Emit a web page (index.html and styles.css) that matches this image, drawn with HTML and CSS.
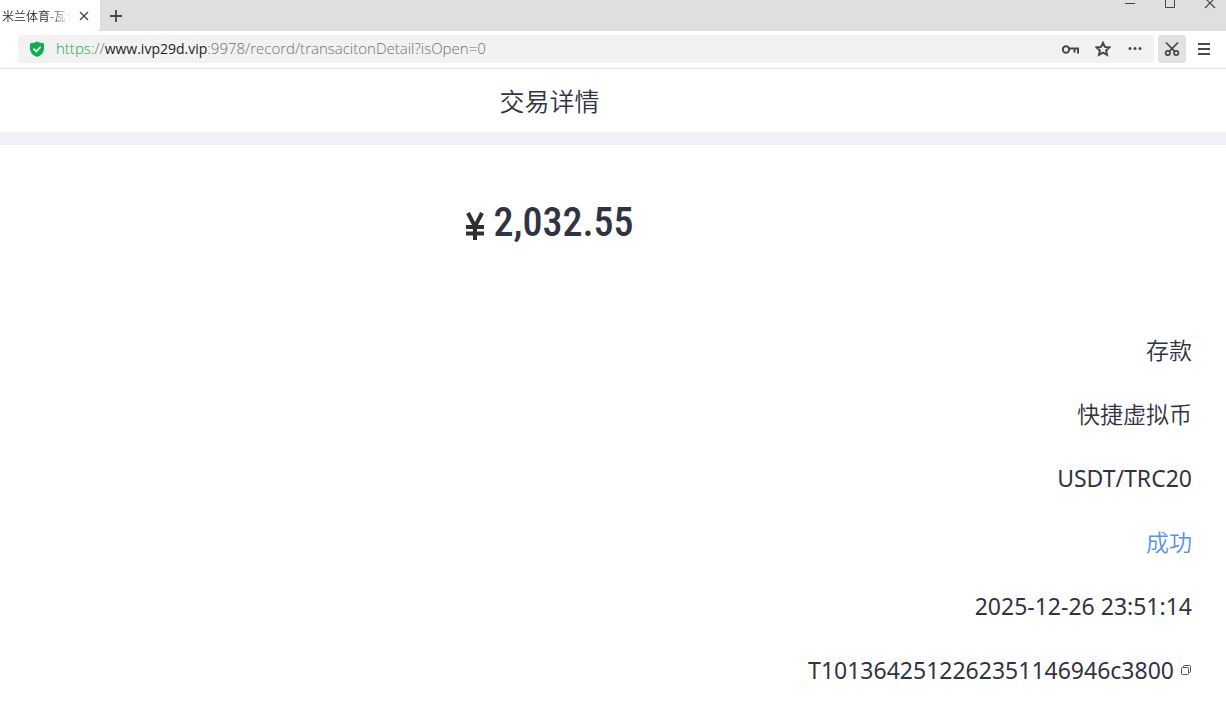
FILE: index.html
```html
<!DOCTYPE html>
<html lang="zh-CN">
<head>
<meta charset="utf-8">
<meta name="viewport" content="width=device-width, initial-scale=1">
<title>交易详情</title>
<link rel="stylesheet" href="styles.css">
</head>
<body>
<header class="browser">
  <div class="tabs">
    <div class="tab">
      <span class="tab-title">米兰体育-瓦亻</span>
      <button class="icon-button tab-close" aria-label="关闭标签页">
        <svg width="10" height="10" viewBox="0 0 10 10"><path d="M1 1l8 8M9 1L1 9" stroke="#444" stroke-width="1.3"/></svg>
      </button>
    </div>
    <button class="icon-button new-tab" aria-label="新标签页">
      <svg width="14" height="14" viewBox="0 0 14 14"><path d="M7 1v12M1 7h12" stroke="#444" stroke-width="1.8"/></svg>
    </button>
    <div class="window-controls">
      <button class="icon-button" aria-label="最小化"><svg width="12" height="14" viewBox="0 0 12 14"><path d="M1 8.500h10" stroke="#444"/></svg></button>
      <button class="icon-button" aria-label="最大化"><svg width="12" height="14" viewBox="0 0 12 14"><path d="M1.500 2.500h9v10h-9z" fill="none" stroke="#444"/></svg></button>
      <button class="icon-button" aria-label="关闭"><svg width="12" height="14" viewBox="0 0 12 14"><path d="M1 3l10 10M11 3L1 13" stroke="#444" stroke-width="1.1"/></svg></button>
    </div>
  </div>
  <div class="toolbar">
    <div class="address">
      <svg class="shield" width="16" height="16" viewBox="0 0 16 16"><path d="M8 0.500Q11 2.500 15 2.300V8q0 5.300-7 8Q1 13.300 1 8V2.300Q5 2.500 8 .500z" fill="#10ae50"/><path d="M4.500 7.700l2.700 2.700 4.500-4.500" fill="none" stroke="#fff" stroke-width="1.8"/></svg>
      <div class="url" role="textbox" aria-label="地址栏" tabindex="0"><span class="url-scheme">https:</span>//<span class="url-host">www.ivp29d.vip</span>:9978/record/transacitonDetail?isOpen=0</div>
      <button class="icon-button" aria-label="密码">
        <svg width="18" height="16" viewBox="0 0 18 16" fill="none" stroke="#484848" stroke-width="2"><circle cx="5" cy="8.500" r="3.200"/><path d="M8 7.500h9v5M13.500 8v3.500"/></svg>
      </button>
      <button class="icon-button" aria-label="收藏">
        <svg width="16" height="16" viewBox="0 0 16 16"><path d="M8 1.800l1.900 4.100 4.500.500-3.300 3 .9 4.500L8 11.600l-4 2.300.900-4.500-3.300-3 4.500-.500z" fill="none" stroke="#484848" stroke-width="2"/></svg>
      </button>
      <button class="icon-button" aria-label="更多">
        <svg width="16" height="16" viewBox="0 0 16 16" fill="#484848"><circle cx="3" cy="7.500" r="1.500"/><circle cx="8" cy="7.500" r="1.500"/><circle cx="13" cy="7.500" r="1.500"/></svg>
      </button>
    </div>
    <button class="icon-button snip" aria-label="截图">
      <svg width="16" height="16" viewBox="0 0 16 16" fill="none" stroke="#484848" stroke-width="1.700"><circle cx="3.800" cy="12" r="2.200"/><circle cx="12.200" cy="12" r="2.200"/><path d="M2 1.500l8.700 8.800M14 1.500l-8.700 8.800"/></svg>
    </button>
    <button class="icon-button menu" aria-label="菜单">
      <svg width="14" height="14" viewBox="0 0 14 14"><path d="M1 2h12M1 7h12M1 12h12" stroke="#484848" stroke-width="2"/></svg>
    </button>
  </div>
</header>
<main>
  <h1 class="page-title">交易详情</h1>
  <p class="amount">
    <svg class="yen" width="20" height="33" viewBox="0 -6 20 33" role="img" aria-label="¥"><path d="M3 0l7 13.500L17 0M10 12v15M1 14h18M1 20.500h18" fill="none" stroke="#2e3033" stroke-width="4"/></svg>
    <span>2,032.55</span>
  </p>
  <ul class="details">
    <li class="label">存款</li>
    <li class="label">快捷虚拟币</li>
    <li>USDT/TRC20</li>
    <li class="label success">成功</li>
    <li>2025-12-26 23:51:14</li>
    <li>T1013642512262351146946c3800
      <button class="icon-button copy" aria-label="复制">
        <svg width="12" height="12" viewBox="0 0 12 12" fill="none" stroke="#555"><rect x="1.500" y="3.500" width="7" height="7" rx="1"/><path d="M3.500 3.500v-1q0-1 1-1h5q1 0 1 1v5q0 1-1 1h-1"/></svg>
      </button>
    </li>
  </ul>
</main>
</body>
</html>
```
FILE: styles.css
```css
* { box-sizing: border-box; }
body {
  margin: 0;
  background: #fff;
  color: #303442;
  font-family: "Noto Sans", "Noto Sans CJK SC", sans-serif;
}
.icon-button {
  display: flex;
  align-items: center;
  justify-content: center;
  flex: none;
  padding: 0;
  border: 0;
  background: none;
}
.browser { border-bottom: 1px solid #e2e2e2; }
.tabs {
  display: flex;
  height: 31px;
  background: #dfdfdf;
}
.tab {
  display: flex;
  align-items: center;
  width: 100px;
  padding: 0 11px 0 2px;
  gap: 8px;
  border-radius: 0 0 4px 0;
  background: #fff;
}
.tab-title {
  flex: 1;
  overflow: hidden;
  white-space: nowrap;
  font-size: 12px;
  font-weight: 350;
  background: linear-gradient(90deg, #222 70%, transparent);
  background-clip: text;
  color: transparent;
}
.new-tab { width: 32px; }
.window-controls {
  display: flex;
  align-items: flex-start;
  gap: 28px;
  margin-left: auto;
  padding-right: 10px;
  height: 14px;
  margin-top: -5px;
}
.toolbar {
  display: flex;
  align-items: center;
  padding: 4px 8px 5px 18px;
}
.address {
  display: flex;
  flex: 1;
  align-items: center;
  height: 28px;
  padding: 0 11px;
  gap: 16px;
  border-radius: 3px;
  background: #f2f2f2;
}
.url {
  flex: 1;
  margin-left: -5px;
  padding-bottom: 2px;
  font-family: "Open Sans", sans-serif;
  font-size: 15px;
  line-height: 20px;
  font-weight: 300;
  color: #707070;
  white-space: nowrap;
}
.url-scheme { color: #10a84c; }
.url-host {
  color: #222;
  font-size: 14px;
  font-weight: 400;
}
.snip {
  width: 28px;
  height: 28px;
  margin-left: 4px;
  border-radius: 3px;
  background: #e2e2e2;
}
.menu { width: 28px; margin-left: 4px; }
.page-title {
  margin: 0;
  padding: 14px 127px 13px 0;
  border-bottom: 13px solid #f1f1f5;
  font-size: 25px;
  line-height: 36px;
  font-weight: 350;
  text-align: center;
}
.amount {
  display: flex;
  align-items: center;
  justify-content: center;
  gap: 8px;
  margin: 0;
  padding: 50px 127px 67px 0;
  font-family: "Roboto Condensed", "Roboto", sans-serif;
  font-size: 40px;
  line-height: 56px;
  font-weight: 500;
}
.details {
  margin: 0;
  padding: 0 34px 0 0;
  list-style: none;
  font-size: 23px;
  line-height: 64px;
}
.details li {
  display: flex;
  align-items: center;
  justify-content: flex-end;
  gap: 6px;
}
.details .label { font-weight: 350; }
.details .success { color: #5b8ff0; }
```
